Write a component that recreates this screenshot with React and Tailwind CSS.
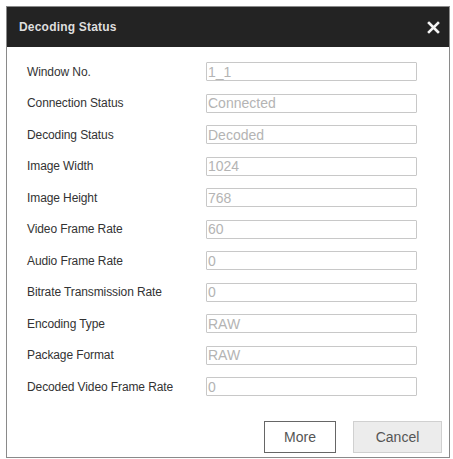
import React from 'react';

const rows = [
    ['Window No.', '1_1'],
    ['Connection Status', 'Connected'],
    ['Decoding Status', 'Decoded'],
    ['Image Width', '1024'],
    ['Image Height', '768'],
    ['Video Frame Rate', '60'],
    ['Audio Frame Rate', '0'],
    ['Bitrate Transmission Rate', '0'],
    ['Encoding Type', 'RAW'],
    ['Package Format', 'RAW'],
    ['Decoded Video Frame Rate', '0'],
];

export default function App() {
    return (
        <div className="w-[453px] h-[459px] bg-white pl-[6px] pt-[6px] font-['Liberation_Sans',Arial,sans-serif]">
            <div className="w-[444px] h-[452px] flex flex-col border border-[#8a8a8a] bg-white">
                <div className="h-[40px] shrink-0 bg-[#232323] flex items-center justify-between pl-[12px] pr-[9px]">
                    <span className="text-[12px] font-bold text-[#dedede] tracking-[0.2px]">Decoding Status</span>
                    <svg width="13" height="13" viewBox="0 0 13 13">
                        <path d="M2 2 L11 11 M11 2 L2 11" stroke="#f4f4f4" strokeWidth="2.6" strokeLinecap="square" />
                    </svg>
                </div>
                <div className="flex flex-col gap-[12.5px] pt-[15px] pl-[20px]">
                    {rows.map(([label, value]) => (
                        <div key={label} className="flex items-center h-[19px]">
                            <span className="w-[179px] text-[12px] text-[#333] tracking-[-0.1px]">{label}</span>
                            <div className="w-[211px] h-[19px] border border-[#c8c8c8] rounded-[1px] flex items-center pl-[1px] text-[14px] text-[#b4b4b4] leading-none">
                                {value}
                            </div>
                        </div>
                    ))}
                </div>
                <div className="flex justify-end gap-[17px] pr-[7px] mt-[25px]">
                    <button className="w-[72px] h-[32px] border border-[#666] bg-white text-[14px] text-[#555]">More</button>
                    <button className="w-[89px] h-[32px] border border-[#d0d0d0] bg-[#ececec] text-[14px] text-[#555]">Cancel</button>
                </div>
            </div>
        </div>
    );
}
